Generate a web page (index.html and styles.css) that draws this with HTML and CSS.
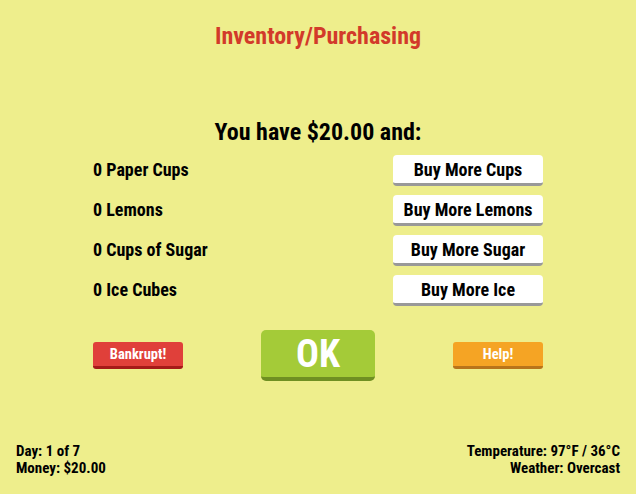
FILE: index.html
```html
<!DOCTYPE html>
<html>
<head>
<meta charset="utf-8">
<link rel="stylesheet" href="styles.css">
</head>
<body>
<div class="screen">
  <h1 class="title">Inventory/Purchasing</h1>
  <div class="panel">
    <h2 class="have">You have $20.00 and:</h2>
    <div class="rows">
      <div class="row"><span class="label">0 Paper Cups</span><button class="buy">Buy More Cups</button></div>
      <div class="row"><span class="label">0 Lemons</span><button class="buy">Buy More Lemons</button></div>
      <div class="row"><span class="label">0 Cups of Sugar</span><button class="buy">Buy More Sugar</button></div>
      <div class="row"><span class="label">0 Ice Cubes</span><button class="buy">Buy More Ice</button></div>
    </div>
    <div class="actions">
      <button class="small red">Bankrupt!</button>
      <button class="ok">OK</button>
      <button class="small orange">Help!</button>
    </div>
  </div>
  <div class="status">
    <div class="left">
      <div>Day: 1 of 7</div>
      <div>Money: $20.00</div>
    </div>
    <div class="right">
      <div>Temperature: 97°F / 36°C</div>
      <div>Weather: Overcast</div>
    </div>
  </div>
</div>
</body>
</html>
```

FILE: styles.css
```css
* { box-sizing: border-box; }
html, body { margin: 0; padding: 0; }
body {
  background: #eeee8c;
  font-family: "Roboto Condensed", "Liberation Sans Narrow", Roboto, sans-serif;
  font-weight: 700;
  color: #000;
}
.screen {
  width: 636px;
  height: 494px;
  display: flex;
  flex-direction: column;
}
.title {
  margin: 0;
  padding-top: 22px;
  font-size: 24px;
  line-height: 28px;
  text-align: center;
  color: #d23a2a;
  font-weight: 700;
}
.panel {
  width: 450px;
  margin: 0 auto;
  padding-top: 68px;
  flex: 1;
}
.have {
  margin: 0;
  font-size: 24px;
  line-height: 28px;
  text-align: center;
  font-weight: 700;
}
.rows {
  margin-top: 9px;
  display: flex;
  flex-direction: column;
  gap: 9px;
}
.row {
  display: flex;
  justify-content: space-between;
  align-items: center;
  height: 31px;
}
.label {
  font-size: 18px;
  padding-bottom: 3px;
}
button {
  font-family: inherit;
  font-weight: 700;
  border: none;
  cursor: pointer;
  padding: 0;
}
.buy {
  width: 150px;
  height: 31px;
  background: #fff;
  border-bottom: 3px solid #999;
  border-radius: 4px;
  font-size: 18px;
  color: #000;
}
.actions {
  margin-top: 24px;
  display: flex;
  justify-content: space-between;
  align-items: center;
}
.small {
  width: 90px;
  height: 27px;
  border-radius: 3px;
  color: #fff;
  font-size: 14.5px;
}
.red { background: #e0403a; border-bottom: 3px solid #a51a18; }
.orange { background: #f5a424; border-bottom: 3px solid #b8741a; }
.ok {
  width: 114px;
  height: 51px;
  background: #a4cb38;
  border-bottom: 4px solid #6f8f22;
  border-radius: 5px;
  color: #fff;
  font-size: 38px;
  line-height: 1;
}
.status {
  display: flex;
  justify-content: space-between;
  padding: 0 16px 17px;
  font-size: 15px;
  line-height: 17px;
}
.right { text-align: right; }
```
